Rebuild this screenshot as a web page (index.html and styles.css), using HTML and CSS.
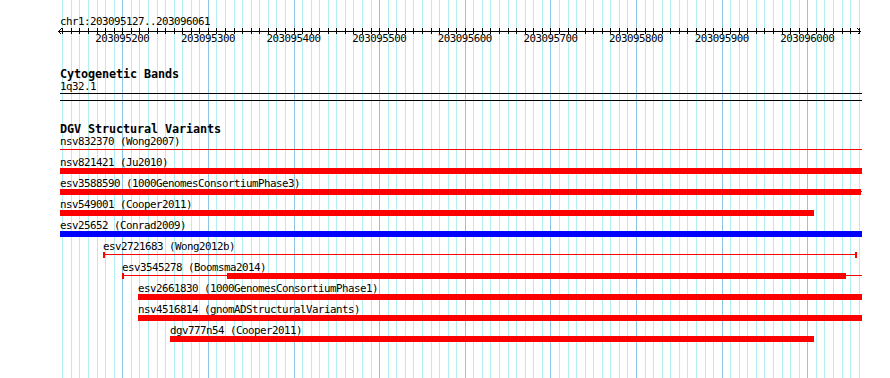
FILE: index.html
```html
<!DOCTYPE html>
<html lang="en">
<head>
  <meta charset="UTF-8" />
  <meta name="viewport" content="width=device-width, initial-scale=1.0" />
  <title>chr1:203095127..203096061</title>
  <link rel="stylesheet" href="styles.css">
</head>
<body>
  <div class="view">
    <svg class="grid" id="grid" width="890" height="378"></svg>

    <div class="tracks">
      <div class="locus">chr1:203095127..203096061</div>
      <svg class="axis" id="axis" width="802" height="20">
        <line x1="-2" y1="4.5" x2="801" y2="4.5" />
        <path d="M1.5 1.5 L-1.5 4.5 L1.5 7.5 M797.5 1.5 L800.5 4.5 L797.5 7.5" />
        <text x="62.3" y="15">203095200</text>
        <text x="147.9" y="15">203095300</text>
        <text x="233.6" y="15">203095400</text>
        <text x="319.2" y="15">203095500</text>
        <text x="404.8" y="15">203095600</text>
        <text x="490.4" y="15">203095700</text>
        <text x="576.1" y="15">203095800</text>
        <text x="661.7" y="15">203095900</text>
        <text x="747.3" y="15">203096000</text>
      </svg>

      <section class="track cyto">
        <h2 class="track-title">Cytogenetic Bands</h2>
        <div class="label">1q32.1</div>
        <div class="band"></div>
      </section>

      <section class="track dgv">
        <h2 class="track-title">DGV Structural Variants</h2>

        <div class="feature">
          <div class="label">nsv832370 (Wong2007)</div>
          <div class="span" style="width: 802px"></div>
        </div>
        <div class="feature">
          <div class="label">nsv821421 (Ju2010)</div>
          <div class="span solid" style="width: 802px"></div>
        </div>
        <div class="feature">
          <div class="label">esv3588590 (1000GenomesConsortiumPhase3)</div>
          <div class="span" style="width: 802px"><div class="block" style="width: 801px"></div></div>
        </div>
        <div class="feature">
          <div class="label">nsv549001 (Cooper2011)</div>
          <div class="span solid" style="width: 754px"></div>
        </div>
        <div class="feature">
          <div class="label">esv25652 (Conrad2009)</div>
          <div class="span solid blue" style="width: 802px"></div>
        </div>
        <div class="feature" style="margin-left: 43px">
          <div class="label">esv2721683 (Wong2012b)</div>
          <div class="span tick-start tick-end" style="width: 754px"></div>
        </div>
        <div class="feature" style="margin-left: 62px">
          <div class="label">esv3545278 (Boomsma2014)</div>
          <div class="span tick-start" style="width: 740px"><div class="block" style="margin-left: 103px; width: 619px"></div></div>
        </div>
        <div class="feature" style="margin-left: 78px">
          <div class="label">esv2661830 (1000GenomesConsortiumPhase1)</div>
          <div class="span solid" style="width: 724px"></div>
        </div>
        <div class="feature" style="margin-left: 78px">
          <div class="label">nsv4516814 (gnomADStructuralVariants)</div>
          <div class="span solid" style="width: 724px"></div>
        </div>
        <div class="feature" style="margin-left: 110px">
          <div class="label">dgv777n54 (Cooper2011)</div>
          <div class="span solid" style="width: 644px"></div>
        </div>
      </section>
    </div>
  </div>

  <script>
    const svgNS = 'http://www.w3.org/2000/svg';
    const grid = document.getElementById('grid');
    const axis = document.getElementById('axis');
    const firstMajor = 122.3; // 203095200
    const step = 8.5625;      // 10 bp
    const trackLeft = 60;

    function addLine(svg, x, y1, y2, cls) {
      const line = document.createElementNS(svgNS, 'line');
      line.setAttribute('x1', x);
      line.setAttribute('x2', x);
      line.setAttribute('y1', y1);
      line.setAttribute('y2', y2);
      if (cls) line.setAttribute('class', cls);
      svg.appendChild(line);
    }

    for (let k = -7; k <= 86; k++) {
      const x = Math.round(firstMajor + k * step) + 0.5;
      addLine(grid, x, 0, 378, k % 10 === 0 ? 'major' : 'minor');
      addLine(axis, x - trackLeft, 1, 7);
    }
  </script>
</body>
</html>
```

FILE: styles.css
```css
body {
  margin: 0;
  background: #fff;
  color: #000;
  font-family: "DejaVu Sans Mono", monospace;
  font-size: 10.8px;
  letter-spacing: -0.5px;
}
.view {
  position: relative;
  width: 890px;
  height: 378px;
  overflow: hidden;
}
.grid {
  position: absolute;
  top: 0;
  left: 0;
}
.grid line {
  stroke-width: 1;
  shape-rendering: crispEdges;
}
.grid .minor {
  stroke: #b2eef2;
}
.grid .major {
  stroke: #8ec6e6;
}
.tracks {
  position: relative;
  width: 802px;
  padding: 16px 0 0 60px;
}
.locus, .label {
  height: 11px;
  line-height: 11px;
  white-space: nowrap;
}
.axis {
  display: block;
  overflow: visible;
}
.axis line, .axis path {
  stroke: #000;
  stroke-width: 1;
  fill: none;
  shape-rendering: crispEdges;
}
.axis text {
  font-family: "DejaVu Sans Mono", monospace;
  font-size: 10.8px;
  letter-spacing: -0.5px;
  text-anchor: middle;
  fill: #000;
}
.track-title {
  margin: 21px 0 0;
  height: 13px;
  line-height: 13px;
  font-size: 11.8px;
  font-weight: bold;
  letter-spacing: -0.1px;
  white-space: nowrap;
}
.dgv .track-title {
  margin-top: 22px;
}
.band {
  margin-top: 1px;
  height: 6px;
  border-top: 1px solid #000;
  border-bottom: 1px solid #000;
}
.feature {
  height: 21px;
}
.span {
  display: flex;
  box-sizing: border-box;
  height: 6px;
  background: linear-gradient(#f00, #f00) 0 2px / 100% 1px no-repeat;
}
.span.solid {
  background: #f00;
}
.span.blue {
  background: #00f;
}
.tick-start {
  border-left: 2px solid #f00;
}
.tick-end {
  border-right: 2px solid #f00;
}
.block {
  height: 6px;
  background: #f00;
}
```
